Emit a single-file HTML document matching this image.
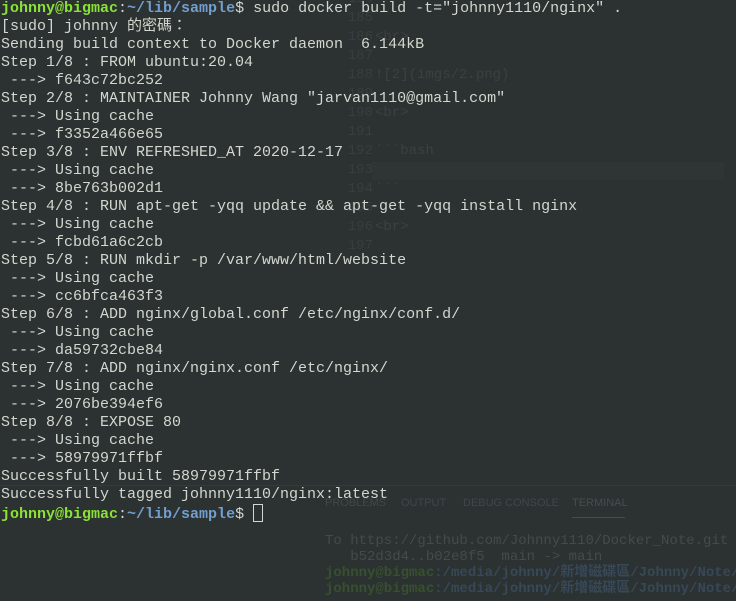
<!DOCTYPE html>
<html><head><meta charset="utf-8"><style>
html,body{margin:0;padding:0;width:736px;height:601px;overflow:hidden;background:#2c3131;}
.g{position:absolute;font-family:"Liberation Mono","Noto Sans CJK TC",monospace;white-space:pre;}
#t{position:absolute;left:1px;top:0;font-family:"Liberation Mono","Noto Sans CJK TC",monospace;font-size:15px;line-height:18px;color:#d3d7cf;white-space:pre;}
.u{color:#8ae234;font-weight:bold}.p{color:#729fcf;font-weight:bold}
.cur{display:inline-block;width:8px;height:16px;border:1px solid #d3d7cf;vertical-align:-4px;}
.tab{position:absolute;top:497px;font-family:'Liberation Sans',sans-serif;font-size:11px;color:#41474a;white-space:nowrap}
</style></head><body>
<div class="g" style="left:345px;top:-10px;font-size:14px;line-height:19px;color:#383e3e;text-align:right;width:28px">184
185
186
187
188
189
190
191
192
193
194
195
196
197</div>
<div class="g" style="left:375px;top:-10px;font-size:14px;line-height:19px;color:#3b4141">

&lt;br&gt;

![2](imgs/2.png)

&lt;br&gt;

&#96;&#96;&#96;bash
sudo docker build -t="johnny1110/nginx" .
&#96;&#96;&#96;

&lt;br&gt;</div>
<div style="position:absolute;left:372px;top:162px;width:352px;height:18px;background:#2f3434"></div>
<div style="position:absolute;left:0;top:485px;width:736px;height:1px;background:#343a3a"></div>
<div class="tab" style="left:325px">PROBLEMS</div>
<div class="tab" style="left:401px">OUTPUT</div>
<div class="tab" style="left:463px">DEBUG CONSOLE</div>
<div class="tab" style="left:572px;color:#474d4f">TERMINAL</div>
<div style="position:absolute;left:572px;top:517px;width:53px;height:1px;background:#464c4c"></div>
<div class="g" style="left:325px;top:533px;font-size:14px;line-height:16px;color:#454b4b">To https://github.com/Johnny1110/Docker_Note.git
   b52d3d4..b02e8f5  main -&gt; main
<span style="color:#38502f;font-weight:bold">johnny@bigmac</span><span style="color:#374858;font-weight:bold">:/media/johnny/新增磁碟區/Johnny/Note/D</span>
<span style="color:#38502f;font-weight:bold">johnny@bigmac</span><span style="color:#374858;font-weight:bold">:/media/johnny/新增磁碟區/Johnny/Note/D</span></div>
<div id="t"><span class="u">johnny@bigmac</span>:<span class="p">~/lib/sample</span>$ sudo docker build -t="johnny1110/nginx" .
[sudo] johnny 的密碼：
Sending build context to Docker daemon  6.144kB
Step 1/8 : FROM ubuntu:20.04
 ---&gt; f643c72bc252
Step 2/8 : MAINTAINER Johnny Wang "jarvan1110@gmail.com"
 ---&gt; Using cache
 ---&gt; f3352a466e65
Step 3/8 : ENV REFRESHED_AT 2020-12-17
 ---&gt; Using cache
 ---&gt; 8be763b002d1
Step 4/8 : RUN apt-get -yqq update &amp;&amp; apt-get -yqq install nginx
 ---&gt; Using cache
 ---&gt; fcbd61a6c2cb
Step 5/8 : RUN mkdir -p /var/www/html/website
 ---&gt; Using cache
 ---&gt; cc6bfca463f3
Step 6/8 : ADD nginx/global.conf /etc/nginx/conf.d/
 ---&gt; Using cache
 ---&gt; da59732cbe84
Step 7/8 : ADD nginx/nginx.conf /etc/nginx/
 ---&gt; Using cache
 ---&gt; 2076be394ef6
Step 8/8 : EXPOSE 80
 ---&gt; Using cache
 ---&gt; 58979971ffbf
Successfully built 58979971ffbf
Successfully tagged johnny1110/nginx:latest
<span class="u">johnny@bigmac</span>:<span class="p">~/lib/sample</span>$ <span class="cur"></span></div>
</body></html>
